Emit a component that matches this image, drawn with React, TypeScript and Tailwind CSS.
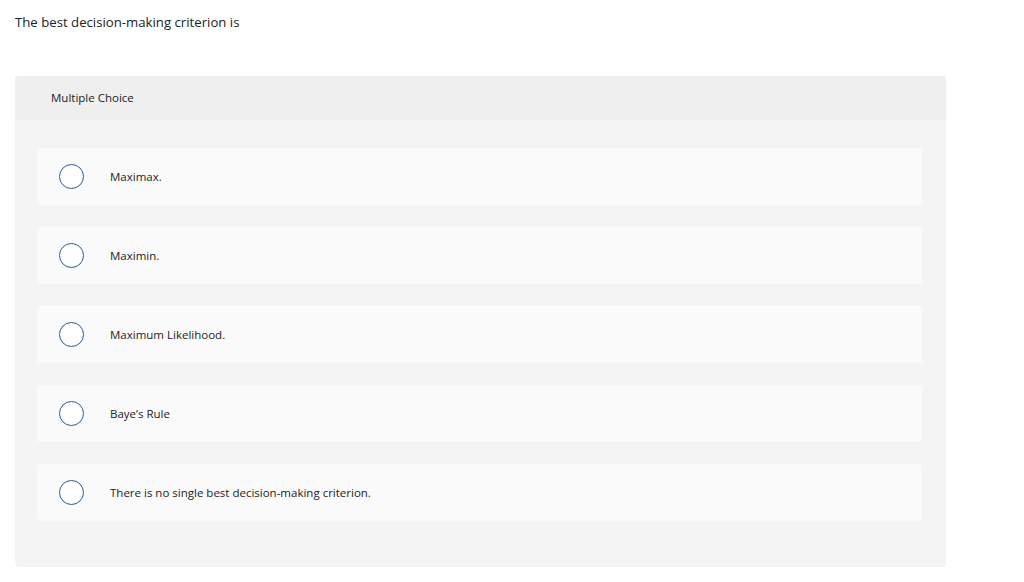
const options = [
  "Maximax.",
  "Maximin.",
  "Maximum Likelihood.",
  "Baye’s Rule",
  "There is no single best decision-making criterion.",
];

export default function App() {
  return (
    <div className="min-h-screen bg-white px-[15px] pt-[13px] text-[#222]" style={{ fontFamily: "'Open Sans', Lato, sans-serif" }}>
      <p className="text-[13.2px] leading-[18px]">The best decision-making criterion is</p>

      <div className="mt-[45px] w-[931px] overflow-hidden rounded-[3px] bg-[#f4f4f4]">
        <div className="flex h-[44px] items-center bg-[#efefef] px-[36px] text-[11.5px]">Multiple Choice</div>
        <div className="flex flex-col gap-[22px] pb-[46px] pl-[22px] pr-[24px] pt-[28px]">
          {options.map((opt) => (
            <label key={opt} className="flex h-[57px] items-center rounded-[3px] bg-[#fafafa] pl-[22px] text-[11.5px]">
              <span className="h-[25px] w-[25px] shrink-0 rounded-full border border-[#2d5c96] bg-white" />
              <span className="ml-[26px]">{opt}</span>
            </label>
          ))}
        </div>
      </div>
    </div>
  );
}
